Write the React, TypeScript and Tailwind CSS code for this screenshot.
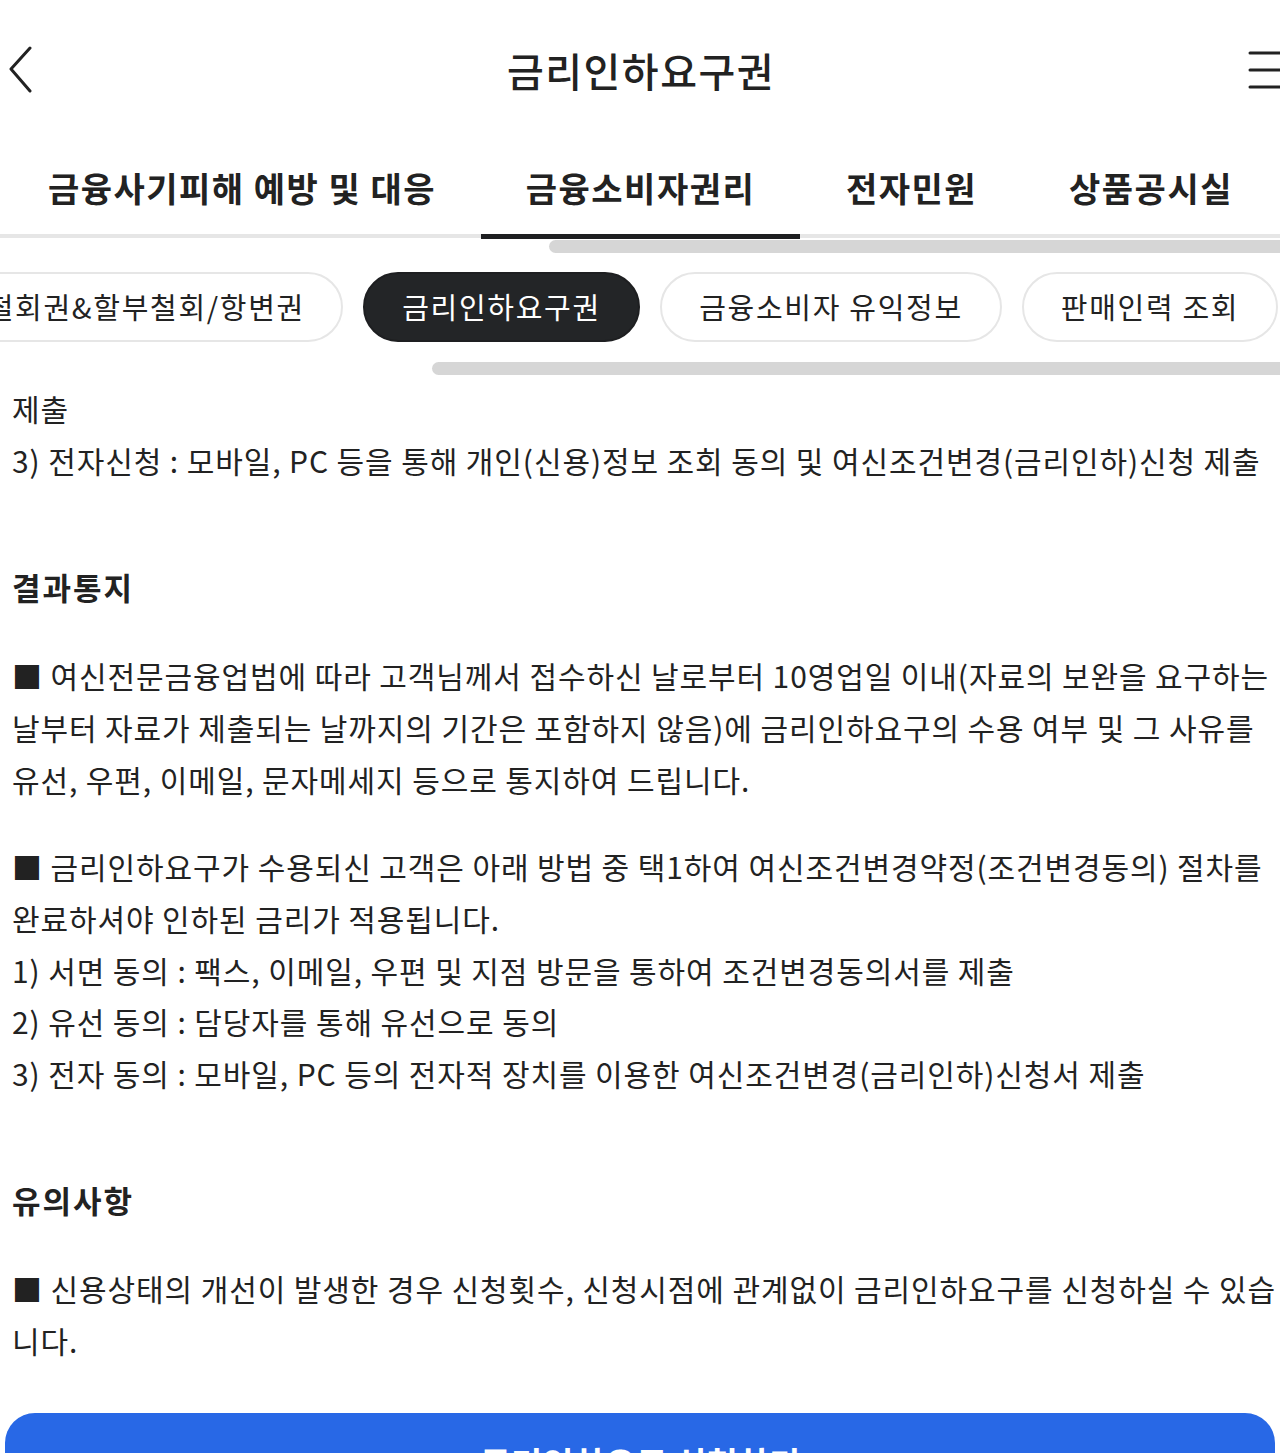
import React from 'react';

const tabs = [
  { label: '금융사기피해 예방 및 대응', w: 'w-[478px]' },
  { label: '금융소비자권리', w: 'w-[319px]', active: true },
  { label: '전자민원', w: 'w-[223px]' },
  { label: '상품공시실', w: 'w-[256px]' },
];

const pills = [
  { label: '철회권&할부철회/항변권', w: 'w-[431px] justify-end pr-[36px]' },
  { label: '금리인하요구권', w: 'w-[277px] justify-center', active: true },
  { label: '금융소비자 유익정보', w: 'w-[342px] justify-center' },
  { label: '판매인력 조회', w: 'w-[256px] justify-center' },
];

function Line({ children }: { children: React.ReactNode }) {
  return <div className="whitespace-nowrap">{children}</div>;
}

export default function App() {
  return (
    <div className="w-[1280px] overflow-hidden bg-white text-[#222222] font-['Noto_Sans_CJK_KR',sans-serif]">
      {/* header */}
      <div className="flex h-[140px] items-center justify-between">
        <svg className="ml-[8px]" width="26" height="48" viewBox="0 0 26 48" fill="none">
          <polyline points="22,2 3,23 22,45" stroke="#222" strokeWidth="3" strokeLinecap="round" strokeLinejoin="round" />
        </svg>
        <div className="text-[40px] font-medium tracking-[1.5px]">금리인하요구권</div>
        <svg className="mr-[-8px]" width="40" height="40" viewBox="0 0 40 40" fill="none">
          <line x1="2" y1="3" x2="40" y2="3" stroke="#222" strokeWidth="3" strokeLinecap="round" />
          <line x1="2" y1="20" x2="40" y2="20" stroke="#222" strokeWidth="3" strokeLinecap="round" />
          <line x1="2" y1="37" x2="40" y2="37" stroke="#222" strokeWidth="3" strokeLinecap="round" />
        </svg>
      </div>

      {/* main tabs */}
      <div className="flex border-b-[4px] border-[#e6e6e6] pl-[3px]">
        {tabs.map((t) => (
          <div
            key={t.label}
            className={
              'relative flex h-[94px] shrink-0 items-center justify-center whitespace-nowrap text-[34px] font-bold tracking-[1.5px] ' +
              t.w
            }
          >
            {t.label}
            {t.active && <div className="absolute bottom-[-5px] left-0 right-0 h-[5px] bg-[#1e1f21]" />}
          </div>
        ))}
      </div>
      <div className="mt-[2px] ml-[549px] h-[13px] rounded-l-full bg-[#d6d6d6]" />

      {/* sub pills */}
      <div className="mt-[19px] ml-[-88px] flex gap-[20px]">
        {pills.map((p) => (
          <div
            key={p.label}
            className={
              'flex h-[70px] shrink-0 items-center whitespace-nowrap rounded-full border-2 text-[29px] tracking-[1.7px] ' +
              p.w +
              ' ' +
              (p.active ? 'border-[#1e1f21] bg-[#232527] text-white' : 'border-[#e6e6e6] bg-white text-[#222222]')
            }
          >
            {p.label}
          </div>
        ))}
      </div>
      <div className="mt-[20px] ml-[432px] h-[13px] rounded-l-full bg-[#d6d6d6]" />

      {/* content */}
      <div className="mt-[8px] px-[12px] text-[30px] leading-[51.7px] tracking-[0.9px]">
        <Line>제출</Line>
        <Line>3) 전자신청 : 모바일, PC 등을 통해 개인(신용)정보 조회 동의 및 여신조건변경(금리인하)신청 제출</Line>

        <div className="mt-[75px] text-[31px] font-bold tracking-[2px]">결과통지</div>

        <div className="mt-[37px]">
          <Line>■ 여신전문금융업법에 따라 고객님께서 접수하신 날로부터 10영업일 이내(자료의 보완을 요구하는</Line>
          <Line>날부터 자료가 제출되는 날까지의 기간은 포함하지 않음)에 금리인하요구의 수용 여부 및 그 사유를</Line>
          <Line>유선, 우편, 이메일, 문자메세지 등으로 통지하여 드립니다.</Line>
        </div>

        <div className="mt-[36px]">
          <Line>■ 금리인하요구가 수용되신 고객은 아래 방법 중 택1하여 여신조건변경약정(조건변경동의) 절차를</Line>
          <Line>완료하셔야 인하된 금리가 적용됩니다.</Line>
          <Line>1) 서면 동의 : 팩스, 이메일, 우편 및 지점 방문을 통하여 조건변경동의서를 제출</Line>
          <Line>2) 유선 동의 : 담당자를 통해 유선으로 동의</Line>
          <Line>3) 전자 동의 : 모바일, PC 등의 전자적 장치를 이용한 여신조건변경(금리인하)신청서 제출</Line>
        </div>

        <div className="mt-[74px] text-[31px] font-bold tracking-[2px]">유의사항</div>

        <div className="mt-[38px]">
          <Line>■ 신용상태의 개선이 발생한 경우 신청횟수, 신청시점에 관계없이 금리인하요구를 신청하실 수 있습</Line>
          <Line>니다.</Line>
        </div>
      </div>

      {/* bottom button */}
      <div className="mt-[46px] px-[5px]">
        <div className="flex h-[100px] items-center justify-center rounded-[30px] bg-[#2868e6] text-[34px] font-bold text-white">
          금리인하요구 신청하기
        </div>
      </div>
    </div>
  );
}
